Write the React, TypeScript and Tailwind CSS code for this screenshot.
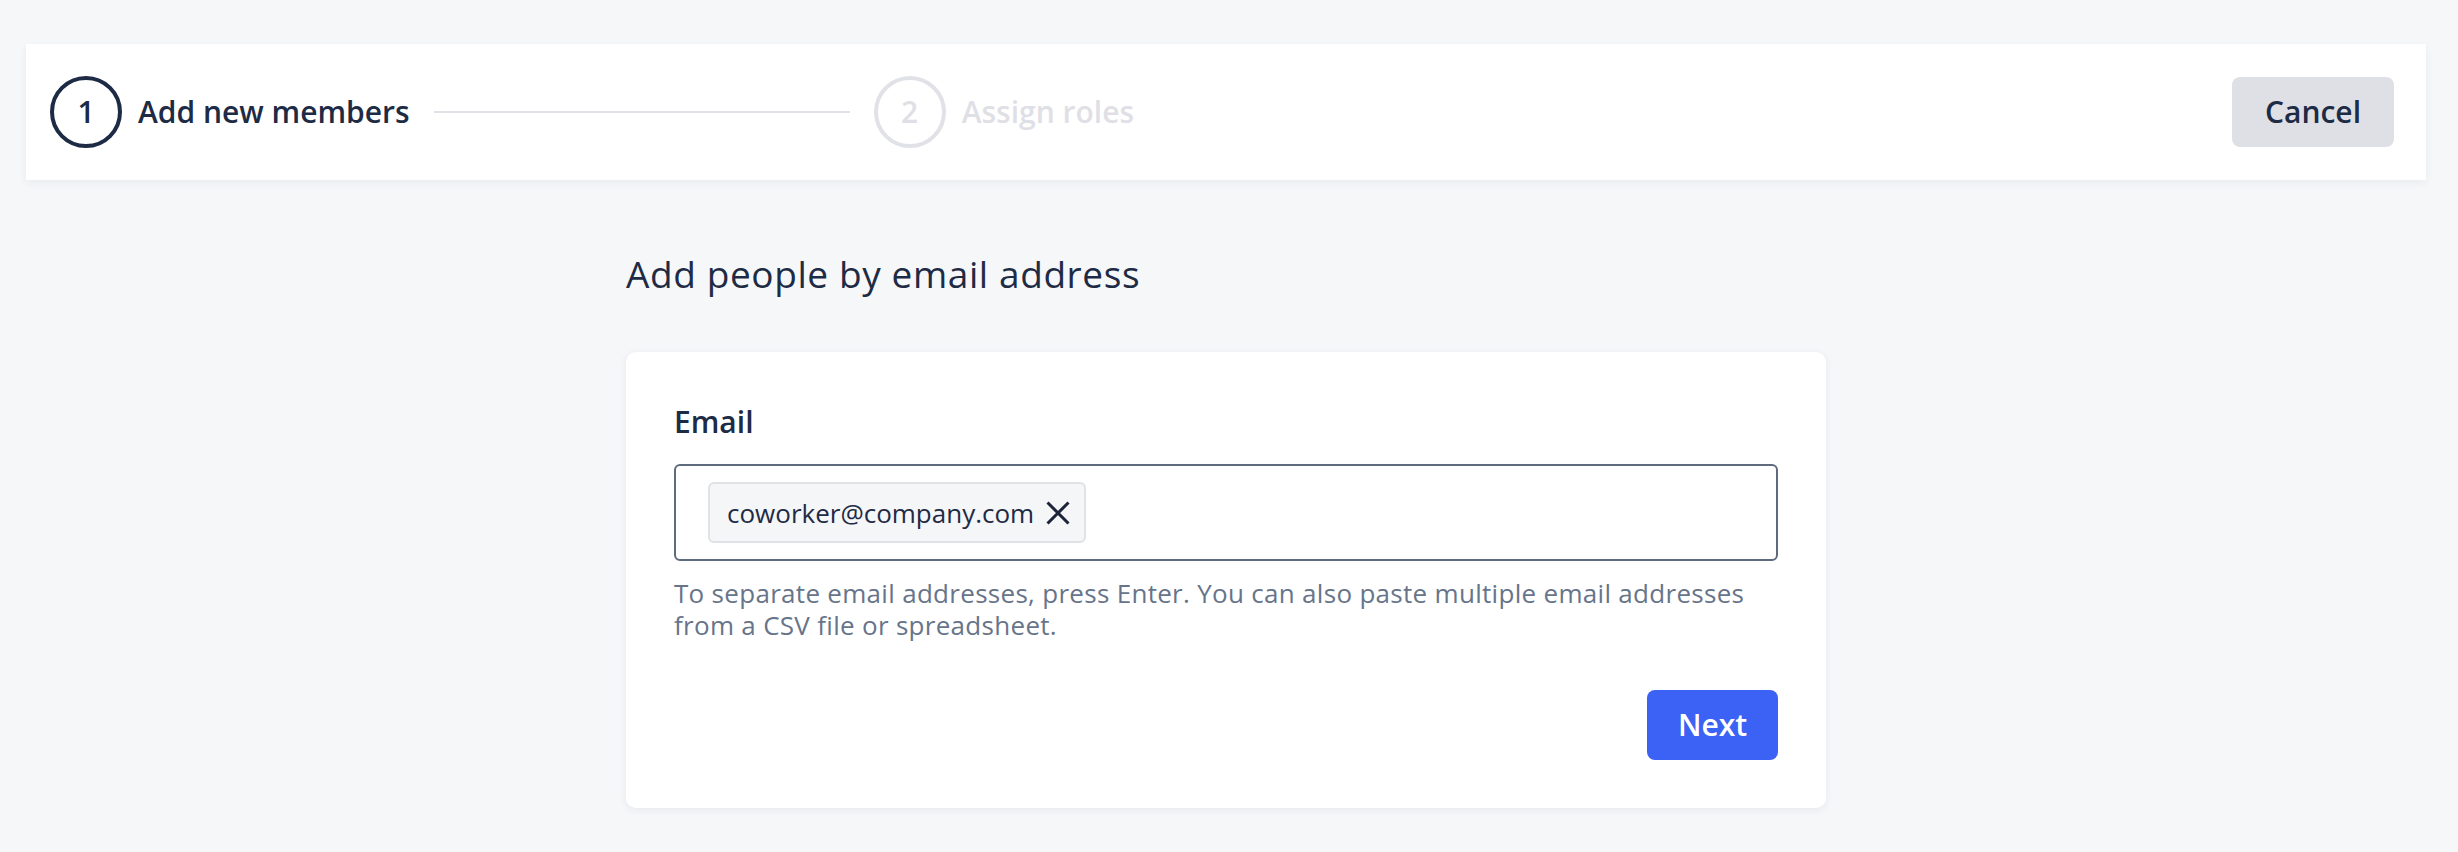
import React from "react";

function XIcon() {
  return (
    <svg width="24" height="24" viewBox="0 0 24 24" fill="none" className="shrink-0">
      <path d="M1.5 1.5L22.5 22.5M22.5 1.5L1.5 22.5" stroke="#1b2438" strokeWidth="3" strokeLinecap="butt" />
    </svg>
  );
}

export default function App() {
  return (
    <div className="min-h-[852px] w-full bg-[#f6f7f9] font-['Open_Sans',sans-serif] text-[#1e2b45]">
      <div className="w-[2452px] pt-[44px]">
        <header className="mx-auto flex h-[136px] w-[2400px] items-center justify-between bg-white pl-[24px] pr-[32px] shadow-[0_3px_8px_rgba(30,43,69,0.06)]">
          <div className="flex items-center">
            <div className="flex h-[72px] w-[72px] items-center justify-center rounded-full border-[4px] border-[#1e2b45] text-[30px] font-semibold leading-none">
              1
            </div>
            <span className="ml-[16px] text-[30px] font-semibold leading-none">Add new members</span>
            <div className="mx-[24px] h-[2px] w-[416px] bg-[#e1e2e7]" />
            <div className="flex h-[72px] w-[72px] items-center justify-center rounded-full border-[4px] border-[#e1e2e7] text-[30px] font-semibold leading-none text-[#dfe0e5]">
              2
            </div>
            <span className="ml-[16px] text-[30px] font-semibold leading-none text-[#dfe0e5]">Assign roles</span>
          </div>
          <button className="flex h-[70px] items-center rounded-[8px] bg-[#dfe0e5] px-[33px] text-[30px] font-semibold leading-none text-[#1e2b45]">
            Cancel
          </button>
        </header>

        <main className="mx-auto w-[1200px]">
          <h1 className="mt-[72px] text-[37px] font-normal leading-[44px] tracking-[0.6px] text-[#1e2b45]">
            Add people by email address
          </h1>
          <section className="mt-[56px] rounded-[10px] bg-white p-[48px] shadow-[0_2px_8px_rgba(30,43,69,0.07)]">
            <label className="block text-[30px] font-semibold leading-[44px]">Email</label>
            <div className="mt-[20px] flex h-[97px] items-center rounded-[6px] border-2 border-[#5e6a7d] px-[32px]">
              <div className="flex h-[61px] items-center gap-[12px] rounded-[6px] border-2 border-[#e0e2e6] bg-[#f5f6f8] pl-[17px] pr-[14px]">
                <span className="text-[26px] leading-none text-[#1e2b45]">coworker@company.com</span>
                <XIcon />
              </div>
            </div>
            <p className="mt-[16px] text-[26px] leading-[32px] tracking-[0.3px] text-[#67748a]">
              To separate email addresses, press Enter. You can also paste multiple email addresses
              <br />
              from a CSV file or spreadsheet.
            </p>
            <div className="mt-[49px] flex justify-end">
              <button className="flex h-[70px] w-[131px] items-center justify-center rounded-[8px] bg-[#3c61f5] text-[30px] font-semibold leading-none text-white">
                Next
              </button>
            </div>
          </section>
        </main>
      </div>
    </div>
  );
}
